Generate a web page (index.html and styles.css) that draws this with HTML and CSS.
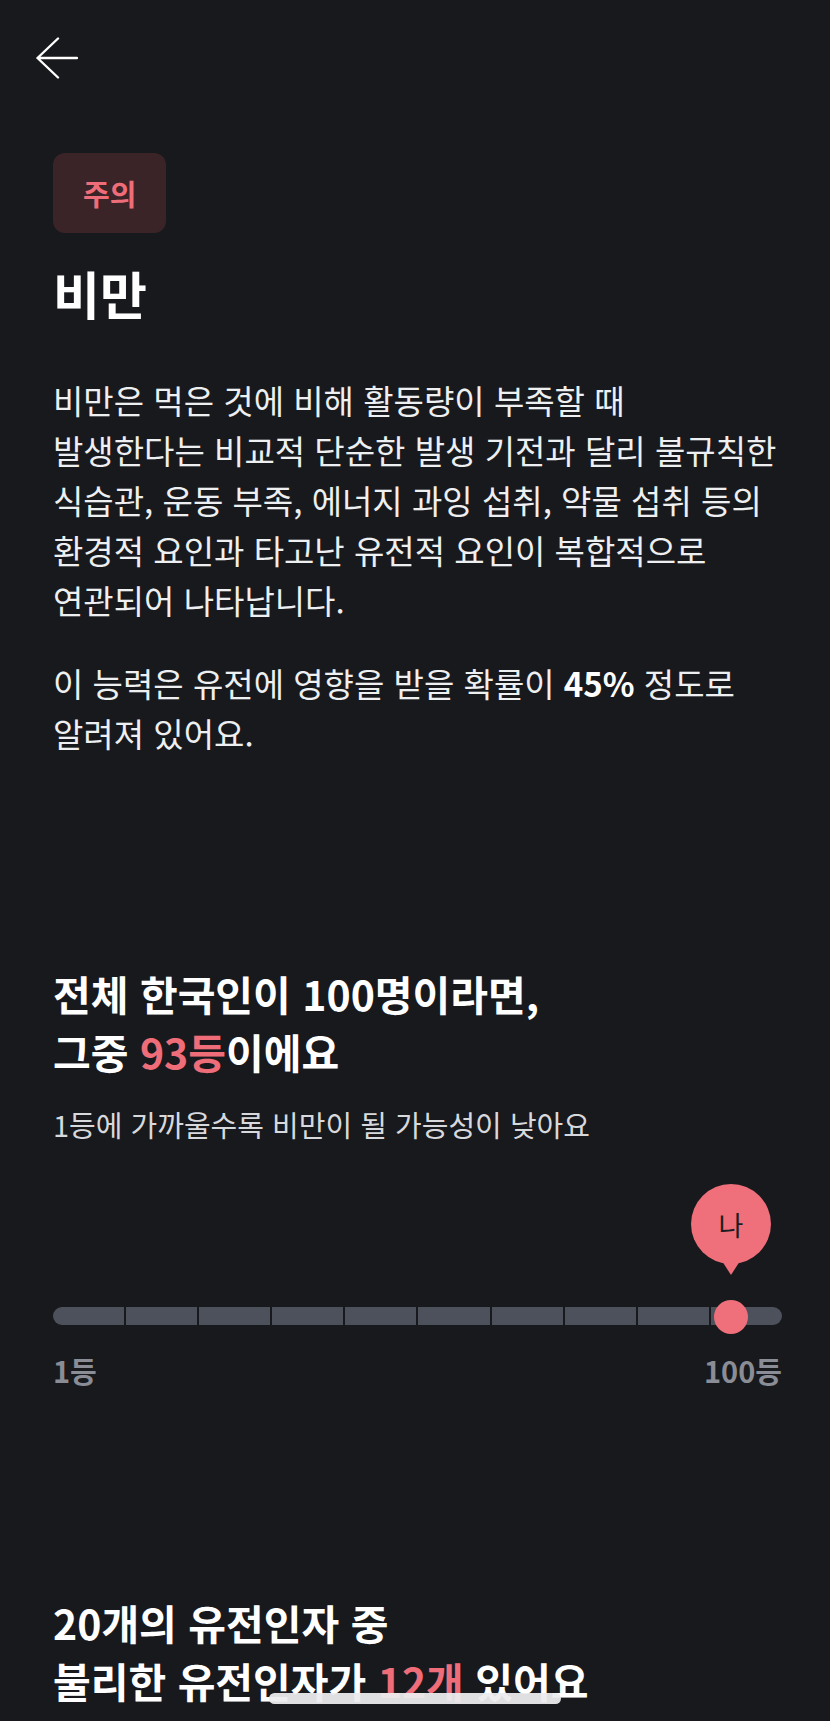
FILE: index.html
```html
<!DOCTYPE html>
<html lang="ko">
<head>
    <meta charset="UTF-8">
    <meta name="viewport" content="width=device-width, initial-scale=1.0">
    <title>비만</title>
    <link rel="stylesheet" href="styles.css">
</head>

<body>
    <header class="topbar">
        <button class="back" type="button" aria-label="뒤로">
            <svg width="42" height="42" viewBox="0 0 42 42">
                <path d="M22 1.5 L1.5 21 L22 40.5 M1.5 21 H41" fill="none" stroke="#fff" stroke-width="2.4" stroke-linecap="round" stroke-linejoin="round"/>
            </svg>
        </button>
    </header>

    <main class="content">
        <section class="intro">
            <span class="badge">주의</span>
            <h1 class="title">비만</h1>
            <p class="desc">비만은 먹은 것에 비해 활동량이 부족할 때<br>발생한다는 비교적 단순한 발생 기전과 달리 불규칙한<br>식습관, 운동 부족, 에너지 과잉 섭취, 약물 섭취 등의<br>환경적 요인과 타고난 유전적 요인이 복합적으로<br>연관되어 나타납니다.</p>
            <p class="desc">이 능력은 유전에 영향을 받을 확률이 <b>45%</b> 정도로 알려져 있어요.</p>
        </section>

        <section class="rank">
            <h2 class="heading">전체 한국인이 100명이라면,<br>그중 <em class="accent">93등</em>이에요</h2>
            <p class="sub">1등에 가까울수록 비만이 될 가능성이 낮아요</p>

            <div class="chart">
                <div class="pin" style="left: 93%;">나</div>
                <div class="track">
                    <span class="seg"></span>
                    <span class="seg"></span>
                    <span class="seg"></span>
                    <span class="seg"></span>
                    <span class="seg"></span>
                    <span class="seg"></span>
                    <span class="seg"></span>
                    <span class="seg"></span>
                    <span class="seg"></span>
                    <span class="seg"></span>
                </div>
                <div class="dot" style="left: 93%;"></div>
            </div>
            <div class="scale">
                <span>1등</span>
                <span>100등</span>
            </div>
        </section>

        <section class="genes">
            <h2 class="heading">20개의 유전인자 중<br>불리한 유전인자가 <em class="accent">12개</em> 있어요</h2>
        </section>
    </main>

    <div class="home-bar"></div>
</body>

</html>
```

FILE: styles.css
```css
* {
    margin: 0;
    padding: 0;
    box-sizing: border-box;
}

html,
body {
    background-color: #18191d;
}

body {
    min-height: 1721px;
    color: #eeeff1;
    font-family: "Noto Sans CJK KR", "Noto Sans", sans-serif;
    word-break: keep-all;
}

.topbar {
    height: 116px;
    display: flex;
    align-items: center;
    padding-left: 36px;
}

.back {
    display: block;
    width: 42px;
    height: 42px;
    background: none;
    border: 0;
    cursor: pointer;
}

.back svg {
    display: block;
}

.content {
    padding: 37px 40px 0 53px;
}

/* 상단 소개 */
.badge {
    display: inline-flex;
    align-items: center;
    justify-content: center;
    height: 80px;
    padding: 0 30px;
    border-radius: 12px;
    background-color: #3a2428;
    color: #ef6d79;
    font-size: 29px;
    font-weight: 700;
    line-height: 1;
}

.title {
    margin-top: 30px;
    font-size: 51px;
    line-height: 60px;
    font-weight: 700;
    color: #fff;
}

.desc {
    font-size: 33px;
    line-height: 50px;
    color: #eeeff1;
}

.title + .desc {
    margin-top: 52px;
}

.desc + .desc {
    margin-top: 33px;
}

.desc b {
    font-weight: 700;
    color: #fff;
}

/* 순위 */
.rank,
.genes {
    margin-top: 206px;
}

.heading {
    font-size: 41px;
    line-height: 58px;
    font-weight: 700;
    color: #fff;
}

.accent {
    font-style: normal;
    color: #ef6d79;
}

.sub {
    margin-top: 24px;
    font-size: 29px;
    line-height: 40px;
    color: #d8d9dc;
}

.chart {
    position: relative;
    width: 729px;
    margin-top: 40px;
    padding-top: 123px;
}

.track {
    display: flex;
    gap: 2px;
    height: 18px;
    border-radius: 9px;
    overflow: hidden;
}

.seg {
    flex: 1;
    background-color: #4c515b;
}

.pin {
    position: absolute;
    top: 0;
    width: 80px;
    height: 80px;
    margin-left: -40px;
    border-radius: 50%;
    background-color: #ef6f7a;
    display: flex;
    align-items: center;
    justify-content: center;
    color: #1d1e22;
    font-size: 27px;
    line-height: 1;
}

.pin::after {
    content: '';
    position: absolute;
    top: 77px;
    left: 50%;
    margin-left: -9px;
    border-left: 9px solid transparent;
    border-right: 9px solid transparent;
    border-top: 14px solid #ef6f7a;
}

.dot {
    position: absolute;
    top: 116px;
    width: 34px;
    height: 34px;
    margin-left: -17px;
    border-radius: 50%;
    background-color: #ef6f7a;
}

.scale {
    display: flex;
    justify-content: space-between;
    width: 729px;
    margin-top: 28px;
    font-size: 29px;
    line-height: 34px;
    font-weight: 700;
    color: #8a8d95;
}

.home-bar {
    position: fixed;
    left: 50%;
    bottom: 17px;
    width: 292px;
    height: 11px;
    margin-left: -146px;
    border-radius: 6px;
    background-color: rgba(236, 236, 238, 0.94);
}
```
